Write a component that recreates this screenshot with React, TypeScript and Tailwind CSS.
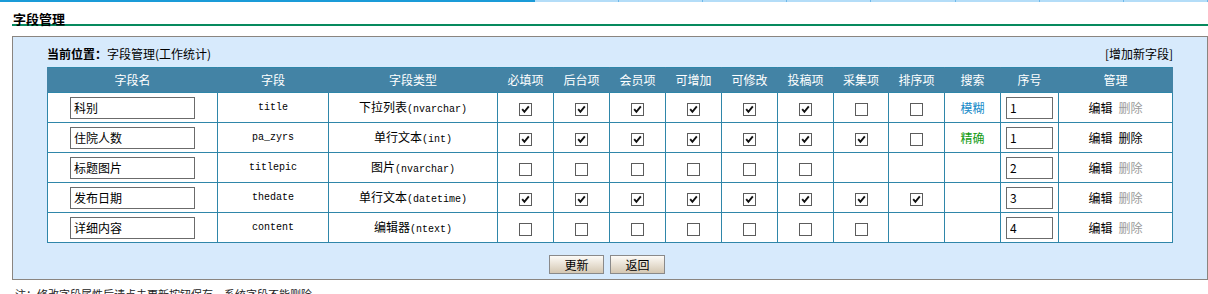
import React from "react";

type Row = {
  name: string;
  field: string;
  type: string;
  arg: string;
  checks: (boolean | null)[];
  search: string;
  order: string;
  canDelete: boolean;
};

const rows: Row[] = [
  { name: "科别", field: "title", type: "下拉列表", arg: "(nvarchar)", checks: [true, true, true, true, true, true, false, false], search: "模糊", order: "1", canDelete: false },
  { name: "住院人数", field: "pa_zyrs", type: "单行文本", arg: "(int)", checks: [true, true, true, true, true, true, true, false], search: "精确", order: "1", canDelete: true },
  { name: "标题图片", field: "titlepic", type: "图片", arg: "(nvarchar)", checks: [false, false, false, false, false, false, null, null], search: "", order: "2", canDelete: false },
  { name: "发布日期", field: "thedate", type: "单行文本", arg: "(datetime)", checks: [true, true, true, true, true, true, true, true], search: "", order: "3", canDelete: false },
  { name: "详细内容", field: "content", type: "编辑器", arg: "(ntext)", checks: [false, false, false, false, false, false, false, null], search: "", order: "4", canDelete: false },
];

const heads = ["字段名", "字段", "字段类型", "必填项", "后台项", "会员项", "可增加", "可修改", "投稿项", "采集项", "排序项", "搜索", "序号", "管理"];
const widths = [170, 111, 169, 56, 56, 56, 56, 56, 56, 55, 56, 56, 58, 114];

function CheckBox({ on }: { on: boolean }) {
  return (
    <span className="inline-flex w-[13px] h-[13px] border border-[#5c5c5c] bg-white items-center justify-center align-middle">
      {on && (
        <svg width="9" height="9" viewBox="0 0 9 9">
          <path d="M1.2 4.2 L3.4 6.8 L7.8 1.4" fill="none" stroke="#111" strokeWidth="1.9" />
        </svg>
      )}
    </span>
  );
}

export default function App() {
  return (
    <div className="w-[1208px] h-[294px] overflow-hidden bg-white text-black text-[12px]" style={{ fontFamily: '"Noto Sans CJK SC", "Noto Sans", sans-serif' }}>
      {/* tab strip, cut off at the top */}
      <div className="flex h-[2px]">
        <div className="w-[540px] bg-[#1a9bd8]" />
        {Array.from({ length: 8 }).map((_, i) => (
          <div key={i} className="w-[85px] bg-[#b4ddf8] border-r border-[#6fb9ea]" />
        ))}
        <div className="flex-1 bg-[#b4ddf8]" />
      </div>

      <div className="h-[22px] pl-[13px] pt-[10px] text-[13px] leading-[13px] font-bold">字段管理</div>
      <div className="ml-[12px] h-[2px] bg-[#078a5e]" />

      <div className="ml-[12px] mt-[10px] w-[1196px] border border-[#8a8580] bg-[#d7eafc] px-[34px] pt-[8px] pb-[5px]">
        <div className="flex justify-between h-[18px] leading-[18px] mb-[4px]">
          <div>
            <span className="font-bold">当前位置：</span>字段管理(工作统计)
          </div>
          <div>[增加新字段]</div>
        </div>

        <table className="w-full table-fixed border-collapse border border-[#2f86a9] bg-white">
          <colgroup>
            {widths.map((w, i) => (
              <col key={i} style={{ width: w }} />
            ))}
          </colgroup>
          <thead>
            <tr className="h-[25px] bg-[#4383a5] text-white">
              {heads.map((h) => (
                <th key={h} className="font-normal border-x border-[#4383a5] p-0">{h}</th>
              ))}
            </tr>
          </thead>
          <tbody>
            {rows.map((r) => (
              <tr key={r.field} className="h-[30px]">
                <td className="border border-[#2f86a9] p-0 text-center">
                  <input readOnly defaultValue={r.name} className="w-[125px] h-[22px] border border-[#6b6b6b] bg-white px-[3px] text-[12px] outline-none" />
                </td>
                <td className="border border-[#2f86a9] p-0 text-center text-[10px]" style={{ fontFamily: '"Liberation Mono", monospace' }}>{r.field}</td>
                <td className="border border-[#2f86a9] p-0 text-center">
                  {r.type}
                  <span className="text-[10px]" style={{ fontFamily: '"Liberation Mono", monospace' }}>{r.arg}</span>
                </td>
                {r.checks.map((c, i) => (
                  <td key={i} className="border border-[#2f86a9] p-0 text-center">
                    {c !== null && <CheckBox on={c} />}
                  </td>
                ))}
                <td className={`border border-[#2f86a9] p-0 text-center ${r.search === "模糊" ? "text-[#1489c8]" : "text-[#119a11]"}`}>{r.search}</td>
                <td className="border border-[#2f86a9] p-0 text-center">
                  <input readOnly defaultValue={r.order} className="w-[47px] h-[22px] border border-[#6b6b6b] bg-white px-[3px] text-[12px] outline-none" />
                </td>
                <td className="border border-[#2f86a9] p-0 text-center">
                  <span>编辑</span>
                  <span className={`ml-[6px] ${r.canDelete ? "text-black" : "text-[#9a9a9a]"}`}>删除</span>
                </td>
              </tr>
            ))}
          </tbody>
        </table>

        <div className="flex justify-center gap-[6px] mt-[12px] pr-[6px]">
          <button className="w-[55px] h-[19px] border border-[#8a8a8a] bg-linear-to-b from-[#fdfbf7] to-[#d4c7b2] text-[12px] leading-[17px]">更新</button>
          <button className="w-[55px] h-[19px] border border-[#8a8a8a] bg-linear-to-b from-[#fdfbf7] to-[#d4c7b2] text-[12px] leading-[17px]">返回</button>
        </div>
      </div>

      <div className="pl-[15px] mt-[7px] leading-[14px] text-[#222] text-[11px]">注：修改字段属性后请点击更新按钮保存，系统字段不能删除。</div>
    </div>
  );
}
